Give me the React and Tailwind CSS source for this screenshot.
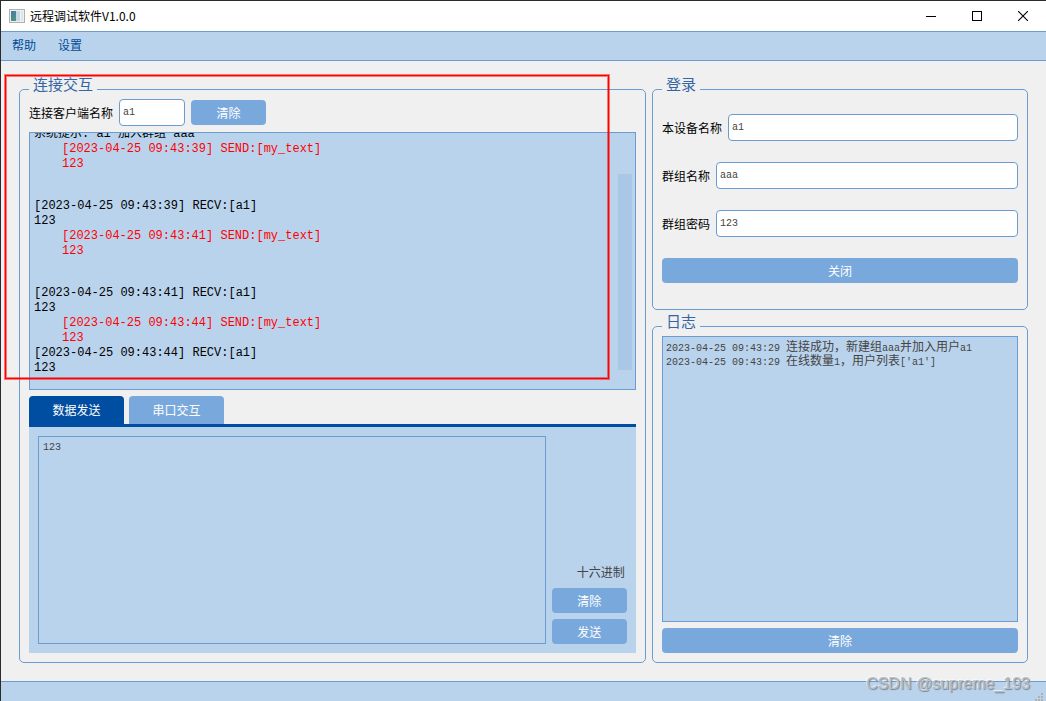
import React, { useState } from 'react';

const MESSAGES = [
  { type: 'send', time: '2023-04-25 09:43:39', name: 'my_text', text: '123', gap: true },
  { type: 'recv', time: '2023-04-25 09:43:39', name: 'a1', text: '123' },
  { type: 'send', time: '2023-04-25 09:43:41', name: 'my_text', text: '123', gap: true },
  { type: 'recv', time: '2023-04-25 09:43:41', name: 'a1', text: '123' },
  { type: 'send', time: '2023-04-25 09:43:44', name: 'my_text', text: '123' },
  { type: 'recv', time: '2023-04-25 09:43:44', name: 'a1', text: '123' },
];

const TABS = ['数据发送', '串口交互'];

function Button({ children, className = '' }) {
  return (
    <button type="button" className={`h-[25px] shrink-0 rounded bg-[#79a9dc] text-white hover:bg-[#8ab6e4] ${className}`}>
      {children}
    </button>
  );
}

function GroupBox({ title, className = '', children }) {
  return (
    <fieldset className={`flex min-h-0 min-w-0 flex-col rounded-[5px] border border-[#6a9cd2] px-[9px] pb-[9px] ${className}`}>
      <legend className="h-4 px-1 text-[15px] leading-[6px] text-[#3465a4]">{title}</legend>
      {children}
    </fieldset>
  );
}

function Field({ id, label, value, inputClass = 'flex-1', className = '' }) {
  return (
    <div className={`flex items-center gap-1.5 ${className}`}>
      <label htmlFor={id} className="shrink-0 text-black">{label}</label>
      <input
        id={id}
        type="text"
        defaultValue={value}
        className={`h-[27px] min-w-0 rounded border border-[#6a9cd2] bg-white px-[3px] font-['Liberation_Mono','Noto_Sans_CJK_SC',monospace] text-[10px] text-[#444] outline-none ${inputClass}`}
      />
    </div>
  );
}

// half-width characters of the log font
function Latin({ children }) {
  return <span className="text-[10px]">{children}</span>;
}

function TitleBar() {
  return (
    <header className="flex h-[30px] shrink-0 items-center bg-white pl-2 text-black">
      <svg width="16" height="14" viewBox="0 0 16 14" shapeRendering="crispEdges" className="mr-[5px]">
        <defs>
          <linearGradient id="pane" x1="0" y1="0" x2="1" y2="1">
            <stop offset="0" stopColor="#4a78a8" />
            <stop offset="1" stopColor="#4fa070" />
          </linearGradient>
        </defs>
        <rect x="0" y="0" width="16" height="14" fill="#b0b0b0" />
        <rect x="1" y="1" width="14" height="12" fill="#f0f0f0" />
        <rect x="2" y="2" width="8" height="10" fill="url(#pane)" />
        <rect x="7" y="2" width="4" height="10" fill="#c9d9e4" />
        <rect x="12" y="2" width="2" height="10" fill="#e0e6e2" />
      </svg>
      <h1 className="flex-1">远程调试软件V1.0.0</h1>
      <button type="button" aria-label="最小化" className="flex h-full w-[46px] items-center justify-center">
        <svg width="10" height="11" viewBox="0 0 10 11" shapeRendering="crispEdges">
          <path d="M0 5.5H10" stroke="#000" />
        </svg>
      </button>
      <button type="button" aria-label="最大化" className="flex h-full w-[46px] items-center justify-center">
        <svg width="10" height="10" viewBox="0 0 10 10" shapeRendering="crispEdges">
          <rect x="0.5" y="0.5" width="9" height="9" fill="none" stroke="#000" />
        </svg>
      </button>
      <button type="button" aria-label="关闭窗口" className="flex h-full w-[46px] items-center justify-center">
        <svg width="10" height="10" viewBox="0 0 10 10">
          <path d="M0 0L10 10M10 0L0 10" stroke="#000" strokeWidth="1.1" />
        </svg>
      </button>
    </header>
  );
}

function ChatView() {
  return (
    <div className="flex min-h-0 flex-1 overflow-hidden border border-[#6a9cd2] bg-[#bad3ed] pr-[3px]">
      <div className="flex flex-1 flex-col justify-end overflow-hidden pb-[13px] pl-1 font-['Liberation_Mono','Noto_Sans_CJK_SC',monospace] leading-[15px] text-black">
        <p className="shrink-0">系统提示: a1 加入群组 aaa</p>
        {MESSAGES.map((m, i) => (
          <div key={i} className={`shrink-0 ${m.type === 'send' ? 'pl-7 text-[#ff0000]' : ''} ${m.gap ? 'pb-[27px]' : ''}`}>
            <p>[{m.time}] {m.type === 'send' ? 'SEND' : 'RECV'}:[{m.name}]</p>
            <p>{m.text}</p>
          </div>
        ))}
      </div>
      <div className="flex w-[14px] flex-col pb-[19px] pt-[41px]">
        <div className="flex-1 bg-[#a9c7e6]" />
      </div>
    </div>
  );
}

function SendTabs() {
  const [tab, setTab] = useState(0);

  return (
    <div className="flex h-[257px] shrink-0 flex-col">
      <div role="tablist" className="flex shrink-0 gap-[5px] border-b-[3px] border-[#004ea1]">
        {TABS.map((name, i) => (
          <button
            key={name}
            type="button"
            role="tab"
            aria-selected={tab === i}
            onClick={() => setTab(i)}
            className={`h-7 w-[95px] rounded-t text-white ${tab === i ? 'bg-[#004ea1]' : 'bg-[#79a9dc]'}`}
          >
            {name}
          </button>
        ))}
      </div>
      <div className="flex min-h-0 flex-1 gap-1.5 bg-[#bad3ed] p-[9px]">
        <textarea
          aria-label="发送内容"
          defaultValue="123"
          className="flex-1 resize-none border border-[#6a9cd2] bg-transparent p-1 font-['Liberation_Mono','Noto_Sans_CJK_SC',monospace] text-[10px] leading-[14px] text-[#444] outline-none"
        />
        <div className="flex w-[75px] flex-col justify-end gap-1.5">
          <label className="h-5 pr-0.5 text-right leading-5 text-[#444]">
            <input type="checkbox" className="appearance-none" />
            十六进制
          </label>
          <Button>清除</Button>
          <Button>发送</Button>
        </div>
      </div>
    </div>
  );
}

export default function App() {
  return (
    <div className="relative flex h-screen flex-col border-l border-t border-[#2b2b2b] bg-[#f0f0f0] font-['Noto_Sans_CJK_SC',sans-serif] text-[12px] leading-4">
      <TitleBar />
      <nav className="flex h-[30px] shrink-0 items-center gap-[22px] border-y border-[#6a9cd2] bg-[#bad3ed] px-[11px] pb-0.5 text-[#004b97]">
        <button type="button">帮助</button>
        <button type="button">设置</button>
      </nav>

      <main className="grid min-h-0 flex-1 grid-cols-[5fr_3fr] gap-1.5 px-[18px] pb-[18px] pt-5">
        <GroupBox title="连接交互">
          <div className="flex min-h-0 flex-1 flex-col gap-1.5 pt-0.5">
            <div className="flex shrink-0 items-center gap-1.5">
              <Field id="client" label="连接客户端名称" value="a1" inputClass="w-[66px]" />
              <Button className="w-[75px]">清除</Button>
            </div>
            <ChatView />
            <SendTabs />
          </div>
        </GroupBox>

        <div className="flex min-h-0 flex-col gap-2">
          <GroupBox title="登录" className="shrink-0">
            <div className="flex flex-col gap-[21px] pb-[17px] pt-[17px]">
              <Field id="device" label="本设备名称" value="a1" />
              <Field id="group" label="群组名称" value="aaa" />
              <Field id="password" label="群组密码" value="123" />
              <Button>关闭</Button>
            </div>
          </GroupBox>

          <GroupBox title="日志" className="flex-1">
            <div className="flex min-h-0 flex-1 flex-col gap-1.5 pt-0.5">
              <div role="log" className="min-h-0 flex-1 overflow-hidden border border-[#6a9cd2] bg-[#bad3ed] px-[3px] py-1 font-['Liberation_Mono','Noto_Sans_CJK_SC',monospace] leading-[14px] text-[#444]">
                <p className="h-[14px]"><Latin>2023-04-25 09:43:29 </Latin>连接成功，新建组<Latin>aaa</Latin>并加入用户<Latin>a1</Latin></p>
                <p className="h-[14px]"><Latin>2023-04-25 09:43:29 </Latin>在线数量<Latin>1</Latin>，用户列表<Latin>['a1']</Latin></p>
              </div>
              <Button>清除</Button>
            </div>
          </GroupBox>
        </div>
      </main>

      <footer className="flex h-5 shrink-0 items-end justify-end border-t border-[#6a9cd2] bg-[#bad3ed] pr-[3px]">
        <svg width="8" height="8" viewBox="0 0 8 8" fill="#b0b0b0" shapeRendering="crispEdges">
          <path d="M6 0h2v2h-2zM3 3h2v2h-2zM6 3h2v2h-2zM0 6h2v2h-2zM3 6h2v2h-2zM6 6h2v2h-2z" />
        </svg>
      </footer>

      {/* highlighted area */}
      <div className="pointer-events-none absolute left-[4px] top-[74px] h-[304px] w-[604px] border border-[#ff0000] shadow-[0_0_0_1px_rgba(255,0,0,0.5),inset_0_0_0_1px_rgba(255,0,0,0.5)]" />
      <span className="pointer-events-none absolute bottom-[7px] right-4 font-['Liberation_Sans',sans-serif] text-[16px] leading-5 text-[#b4bcc4] [text-shadow:1px_1px_1px_#7a848e,-1px_-1px_0_rgba(255,255,255,0.6)]">
        CSDN @supreme_193
      </span>
    </div>
  );
}
